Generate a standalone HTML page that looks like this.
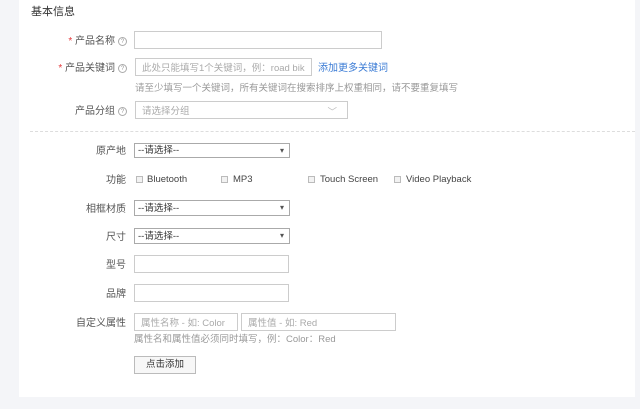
<!DOCTYPE html>
<html><head><meta charset="utf-8"><style>
*{box-sizing:border-box;margin:0;padding:0}
body{width:640px;height:409px;background:#f4f5f8;position:relative;overflow:hidden;font-family:"Liberation Sans","Noto Sans CJK SC",sans-serif;font-size:10px;color:#444}
.panel{position:absolute;left:19px;top:0;width:616px;height:397px;background:#fff}
.a{position:absolute;white-space:nowrap;line-height:12px}
.lbl{position:absolute;text-align:right;width:110px;color:#555;font-size:10px;line-height:12px}
.in{position:absolute;border:1px solid #ccc;background:#fff;color:#aaa;font-size:9.5px;padding-left:6px;display:flex;align-items:center;white-space:nowrap;overflow:hidden}
.sel{position:absolute;border:1px solid #aaa;background:#fff;color:#333;font-size:9.5px;padding-left:3px;display:flex;align-items:center;line-height:11px}
.sel:after{content:"▾";position:absolute;right:5px;top:1px;font-size:8px;color:#555}
.q{display:inline-block;width:9px;height:9px;border:1px solid #aaa;border-radius:50%;font-size:6px;line-height:8px;text-align:center;color:#999;margin-left:3px;vertical-align:middle}
.star{color:#e4393c}
.cb{position:absolute;width:7px;height:7px;border:1px solid #bbb;background:#f2f2f2}
.hint{color:#999;font-size:9.5px}
</style></head><body>
<div class="panel"></div>
<div class="a" style="left:31px;top:6px;font-size:11px;color:#333">基本信息</div>

<div class="lbl" style="left:17px;top:36px"><span class="star">* </span>产品名称<span class="q">?</span></div>
<div class="in" style="left:134px;top:31px;width:248px;height:18px"></div>

<div class="lbl" style="left:17px;top:63px"><span class="star">* </span>产品关键词<span class="q">?</span></div>
<div class="in" style="left:135px;top:58px;width:177px;height:18px">此处只能填写1个关键词，例：road bik</div>
<div class="a" style="left:318px;top:63px;color:#3a7bd5;font-size:10px">添加更多关键词</div>
<div class="a hint" style="left:135px;top:83px">请至少填写一个关键词，所有关键词在搜索排序上权重相同，请不要重复填写</div>

<div class="lbl" style="left:17px;top:106px">产品分组<span class="q">?</span></div>
<div class="in" style="left:135px;top:101px;width:213px;height:18px">请选择分组<span style="position:absolute;right:10px;top:2px;color:#bbb">﹀</span></div>

<div class="a" style="left:30px;top:131px;width:605px;border-top:1px dashed #ddd"></div>

<div class="lbl" style="left:16px;top:146px">原产地</div>
<div class="sel" style="left:134px;top:143px;width:156px;height:15px">--请选择--</div>

<div class="lbl" style="left:16px;top:175px">功能</div>
<div class="cb" style="left:136px;top:176px"></div><div class="a" style="left:147px;top:174px;font-size:9.5px">Bluetooth</div>
<div class="cb" style="left:221px;top:176px"></div><div class="a" style="left:233px;top:174px;font-size:9.5px">MP3</div>
<div class="cb" style="left:308px;top:176px"></div><div class="a" style="left:320px;top:174px;font-size:9.5px">Touch Screen</div>
<div class="cb" style="left:394px;top:176px"></div><div class="a" style="left:406px;top:174px;font-size:9.5px">Video Playback</div>

<div class="lbl" style="left:16px;top:204px">相框材质</div>
<div class="sel" style="left:134px;top:200px;width:156px;height:16px">--请选择--</div>

<div class="lbl" style="left:16px;top:232px">尺寸</div>
<div class="sel" style="left:134px;top:228px;width:156px;height:16px">--请选择--</div>

<div class="lbl" style="left:16px;top:260px">型号</div>
<div class="in" style="left:134px;top:255px;width:155px;height:18px"></div>

<div class="lbl" style="left:16px;top:289px">品牌</div>
<div class="in" style="left:134px;top:284px;width:155px;height:18px"></div>

<div class="lbl" style="left:16px;top:318px">自定义属性</div>
<div class="in" style="left:134px;top:313px;width:104px;height:18px">属性名称 - 如: Color</div>
<div class="in" style="left:241px;top:313px;width:155px;height:18px">属性值 - 如: Red</div>
<div class="a hint" style="left:134px;top:334px">属性名和属性值必须同时填写，例：Color：Red</div>

<div class="a" style="left:134px;top:356px;width:62px;height:18px;border:1px solid #bbb;background:#f7f7f7;text-align:center;line-height:16px;font-size:9.5px;color:#333">点击添加</div>
</body></html>
